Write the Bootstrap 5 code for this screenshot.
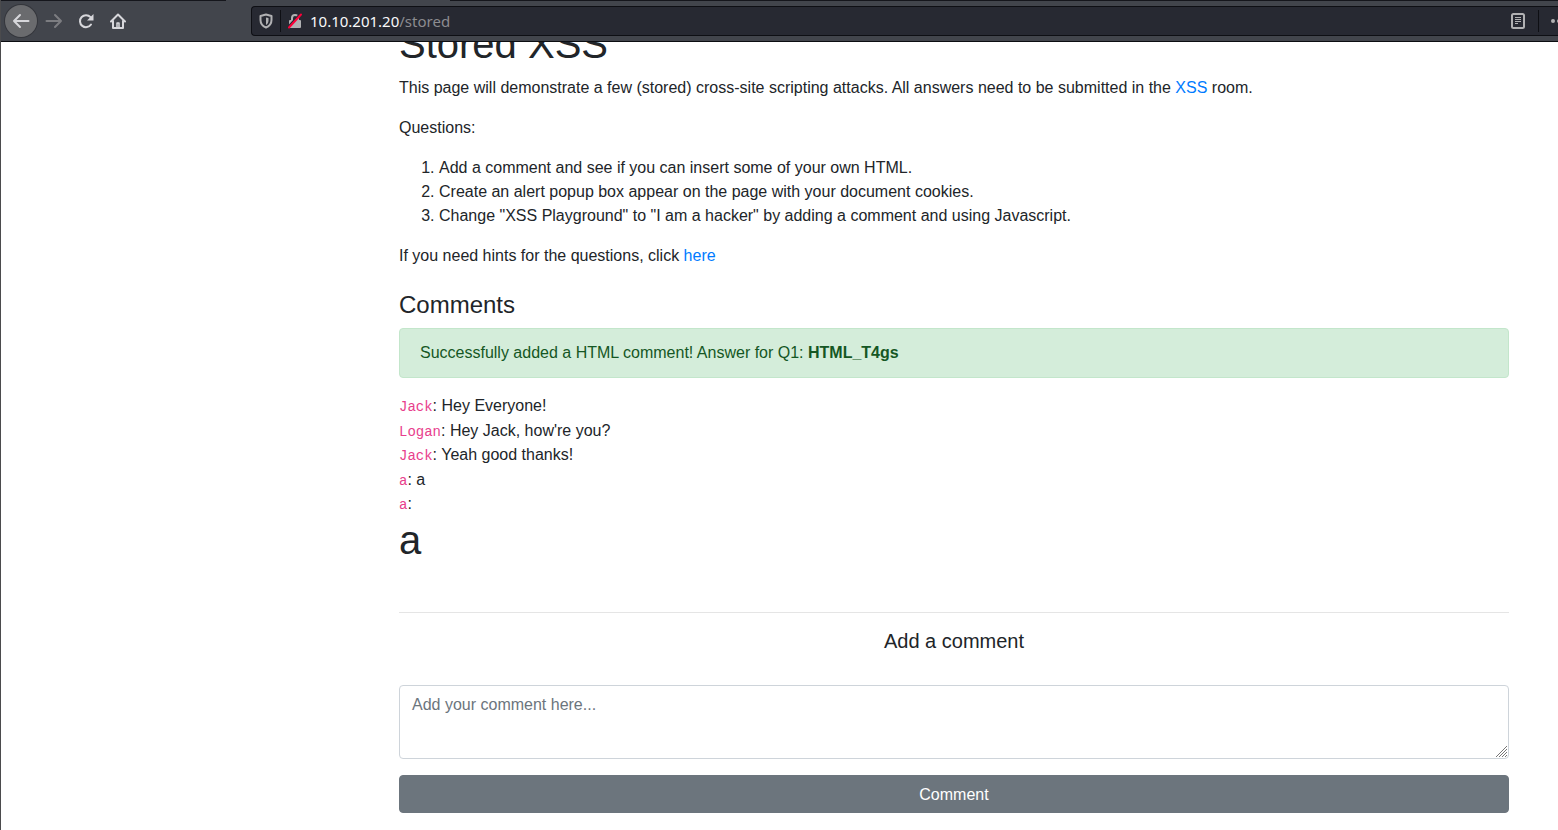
<!DOCTYPE html>
<html lang="en">
<head>
<meta charset="utf-8">
<meta name="viewport" content="width=device-width, initial-scale=1">
<title>Stored XSS</title>
<link href="https://cdn.jsdelivr.net/npm/bootstrap@5.3.0/dist/css/bootstrap.min.css" rel="stylesheet">
<style>
  body { font-family: "Liberation Sans", Arial, sans-serif; font-size: 16px; line-height: 24px; color: #212529; background: #fff; overflow: hidden; }
  a { color: #007bff; text-decoration: none; }
  .window { min-height: 100vh; border-left: 1px solid #4b4b4d; }
  /* browser toolbar */
  .tabline { height: 1px; background: linear-gradient(to right, #15161c 225px, #42454c 225px, #42454c 449px, #15161c 449px); }
  .toolbar { height: 42px; background: #42454c; border-bottom: 1px solid #0c0d11; }
  .toolbar svg { display: block; flex: none; }
  .tool { width: 32px; height: 32px; padding: 0; border: 0; background: none; color: #d7d7db; display: flex; align-items: center; justify-content: center; }
  .tool.back { background: #6a6b6e; border-radius: 50%; box-shadow: 0 0 0 1px #34363c; margin: 0 1px 0 4px; }
  .tool:disabled { color: #7c7d81; }
  .address { height: 30px; margin-left: 117px; background: #272932; border: 1px solid #0e0f14; border-right: 0; border-radius: 4px 0 0 4px; overflow: hidden; padding-left: 6px; }
  .address .tool { width: 16px; height: 20px; color: #b1b1b3; flex: none; }
  .address .more { width: 12px; }
  .divide { width: 1px; height: 22px; background: #0e0f14; flex: none; margin: 0 6px; }
  .divide.wide { margin: 0 7px 0 12px; }
  .url { font-family: "Noto Sans", sans-serif; font-size: 15px; line-height: 20px; color: #f9f9fa; margin-left: 7px; }
  .url span { color: #8c8c90; }
  /* page */
  .page { max-width: 1140px; margin: 0 34px 0 auto; padding: 0 15px; }
  .viewport { overflow: hidden; }
  h1 { font-size: 40px; line-height: 48px; margin-bottom: 8px; }
  h1.lead-title { margin-top: -22px; }
  ol { padding-left: 40px; }
  h4 { font-size: 24px; line-height: 28px; margin: 23px 0 9px; }
  h5 { font-size: 20px; line-height: 24px; margin-bottom: 32px; }
  .alert-success { background: #d4edda; border-color: #c3e6cb; color: #155724; padding: 12px 20px; border-radius: 4px; }
  code { font-family: "Liberation Mono", monospace; font-size: 14px; line-height: 16px; color: #e83e8c; }
  .thread { margin-bottom: 48px; }
  .thread div:nth-child(even) { padding-top: 1px; }
  hr { margin: 16px 0; border-color: #000; opacity: .1; }
  .form-control { height: 74px; padding: 7px 12px 5px; border-color: #ced4da; border-radius: 4px; color: #495057; }
  .form-control::placeholder { color: #6c757d; }
  .form-control::-webkit-resizer { background: url("data:image/svg+xml,%3Csvg xmlns='http://www.w3.org/2000/svg' width='12' height='12'%3E%3Cpath d='M0 11L11 0M3 11l8-8M6 11l5-5M9 11l2-2' stroke='%23777' stroke-width='1'/%3E%3C/svg%3E") no-repeat right bottom; }
  .btn-secondary { background: #6c757d; border-color: #6c757d; border-radius: 4px; margin-top: 16px; padding: 7px 12px 5px; }
</style>
</head>
<body>
<div class="window">
  <header class="toolbar d-flex flex-column">
    <div class="tabline"></div>
    <nav class="d-flex align-items-center flex-grow-1" aria-label="Browser">
      <button class="tool back" type="button" aria-label="Back"><svg width="18" height="18" viewBox="0 0 18 18" fill="none" stroke="currentColor" stroke-width="2" stroke-linecap="round" stroke-linejoin="round"><path d="M16.500 9H2M8 3L2 9l6 6"/></svg></button>
      <button class="tool" type="button" aria-label="Forward" disabled><svg width="18" height="18" viewBox="0 0 18 18" fill="none" stroke="currentColor" stroke-width="2" stroke-linecap="round" stroke-linejoin="round"><path d="M1.500 9H16M10 3l6 6-6 6"/></svg></button>
      <button class="tool" type="button" aria-label="Reload"><svg width="16" height="16" viewBox="0 0 16 16" fill="none"><path d="M13 11.500A6 6 0 1 1 12.500 4.200" stroke="currentColor" stroke-width="2" stroke-linecap="round"/><path d="M15.500 1v6.500H9z" fill="currentColor"/></svg></button>
      <button class="tool" type="button" aria-label="Home"><svg width="16" height="16" viewBox="0 0 16 16" fill="none" stroke="currentColor" stroke-width="2" stroke-linecap="round" stroke-linejoin="round"><path d="M1 8.500l7-7 7 7M3 8v7h10V8"/><path d="M7 14v-4h2v4" stroke-width="1.500"/></svg></button>
      <div class="address d-flex align-items-center flex-grow-1">
        <button class="tool" type="button" aria-label="Tracking protection"><svg width="14" height="16" viewBox="0 0 14 16"><path d="M7 1.500L12.500 3v4c0 3.500-2 6-5.500 7.500C3.500 13 1.500 10.500 1.500 7V3z" fill="none" stroke="currentColor" stroke-width="2" stroke-linejoin="round"/><path d="M7 4.500L9.500 5v2.500c0 2-1 3.500-2.500 4.500z" fill="currentColor"/></svg></button>
        <span class="divide"></span>
        <button class="tool" type="button" aria-label="Connection is not secure"><svg width="16" height="16" viewBox="0 0 16 16"><path d="M5 8V5a3 3 0 0 1 6 0v3" fill="none" stroke="currentColor" stroke-width="2"/><rect x="2" y="7" width="12" height="8" rx="1" fill="currentColor"/><path d="M1 14L13.500 .5" stroke="#272932" stroke-width="2"/><path d="M2 14.500L14 1.500" stroke="#ff0039" stroke-width="2" stroke-linecap="round"/></svg></button>
        <div class="url flex-grow-1">10.10.201.20<span>/stored</span></div>
        <button class="tool" type="button" aria-label="Reader view"><svg width="14" height="16" viewBox="0 0 14 16" fill="none" stroke="currentColor"><rect x="1" y="1" width="12" height="14" rx="1.500" stroke-width="2"/><path d="M4 4.500h6M4 6.500h6M4 8.500h6M4 10.500h3"/></svg></button>
        <span class="divide wide"></span>
        <button class="tool more overflow-hidden justify-content-start" type="button" aria-label="Page actions"><svg width="16" height="16" viewBox="0 0 16 16" fill="currentColor"><circle cx="7" cy="8" r="2"/><circle cx="13" cy="8" r="2"/></svg></button>
      </div>
    </nav>
  </header>
  <div class="viewport">
    <main class="page">
      <h1 class="lead-title">Stored XSS</h1>
      <p>This page will demonstrate a few (stored) cross-site scripting attacks. All answers need to be submitted in the <a href="#">XSS</a> room.</p>
      <p>Questions:</p>
      <ol>
        <li>Add a comment and see if you can insert some of your own HTML.</li>
        <li>Create an alert popup box appear on the page with your document cookies.</li>
        <li>Change "XSS Playground" to "I am a hacker" by adding a comment and using Javascript.</li>
      </ol>
      <p>If you need hints for the questions, click <a href="#">here</a></p>
      <h4>Comments</h4>
      <div class="alert alert-success" role="alert">Successfully added a HTML comment! Answer for Q1: <b>HTML_T4gs</b></div>
      <div class="thread">
        <div><code>Jack</code>: Hey Everyone!</div>
        <div><code>Logan</code>: Hey Jack, how're you?</div>
        <div><code>Jack</code>: Yeah good thanks!</div>
        <div><code>a</code>: a</div>
        <div><code>a</code>:</div>
        <h1>a</h1>
      </div>
      <hr>
      <form>
        <h5 class="text-center"><label for="comment">Add a comment</label></h5>
        <textarea class="form-control" id="comment" placeholder="Add your comment here..."></textarea>
        <button class="btn btn-secondary w-100" type="button">Comment</button>
      </form>
    </main>
  </div>
</div>
<script src="https://cdn.jsdelivr.net/npm/bootstrap@5.3.0/dist/js/bootstrap.bundle.min.js"></script>
</body>
</html>
